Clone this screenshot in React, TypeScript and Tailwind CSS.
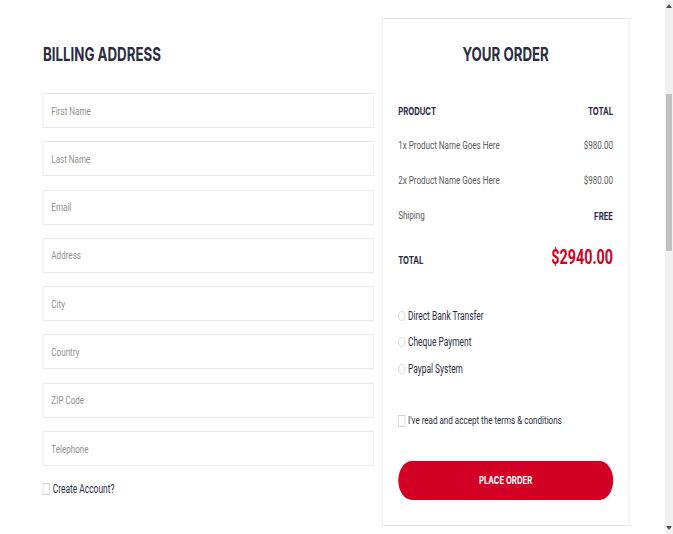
import React from "react";

const fields = ["First Name", "Last Name", "Email", "Address", "City", "Country", "ZIP Code", "Telephone"];

export default function App() {
  return (
    <div className="relative w-[673px] h-[534px] overflow-hidden bg-white">
      <div className="w-[962px] h-[534px] origin-top-left [transform:scaleX(0.7)] font-[Roboto,sans-serif]">
        <div className="h-[534px] flex gap-[11.4px] pl-[61.4px]">
          {/* Billing */}
          <div className="w-[473px] pt-[43px] flex flex-col">
            <h3 className="h-[24px] leading-[24px] text-[19px] font-bold font-[Inter,sans-serif] text-[#2b2d42]">
              BILLING ADDRESS
            </h3>
            <div className="mt-[26px] flex flex-col gap-[13.3px]">
              {fields.map((f) => (
                <input
                  key={f}
                  placeholder={f}
                  className="h-[35px] w-full border border-[#e4e7ed] bg-white px-[11px] text-[11.5px] text-[#333] placeholder:text-[#8f8f8f] outline-none font-[Roboto,sans-serif]"
                />
              ))}
            </div>
            <div className="mt-[15px] h-[16px] flex items-center gap-[4px]">
              <span className="w-[10px] h-[12px] border border-[#d0d0d0] bg-white" />
              <span className="text-[12px] text-[#2b2d42]">Create Account?</span>
            </div>
          </div>

          {/* Order */}
          <div className="w-[353px] mt-[18px] h-[508px] border border-[#e4e7ed] px-[22px] pt-[24px] flex flex-col">
            <h3 className="h-[24px] leading-[24px] text-center text-[19px] font-bold font-[Inter,sans-serif] text-[#2b2d42]">
              YOUR ORDER
            </h3>
            <div className="mt-[26.5px] flex flex-col">
              <div className="h-[35px] flex items-center justify-between text-[11px] font-bold font-[Inter,sans-serif] text-[#2b2d42]">
                <span>PRODUCT</span>
                <span>TOTAL</span>
              </div>
              <div className="h-[35px] flex items-center justify-between text-[11.5px] text-[#5a5a5a]">
                <span>1x Product Name Goes Here</span>
                <span>$980.00</span>
              </div>
              <div className="h-[35px] flex items-center justify-between text-[11.5px] text-[#5a5a5a]">
                <span>2x Product Name Goes Here</span>
                <span>$980.00</span>
              </div>
              <div className="h-[35px] flex items-center justify-between text-[11.5px] text-[#5a5a5a]">
                <span>Shiping</span>
                <span className="text-[11px] font-bold font-[Inter,sans-serif] text-[#2b2d42]">FREE</span>
              </div>
              <div className="mt-[11px] h-[24px] flex items-baseline justify-between">
                <span className="text-[11px] font-bold font-[Inter,sans-serif] text-[#2b2d42]">TOTAL</span>
                <span className="text-[20.5px] leading-[24px] font-bold font-[Roboto,sans-serif] text-[#d10024]">
                  $2940.00
                </span>
              </div>
            </div>

            <div className="mt-[34px] flex flex-col">
              {["Direct Bank Transfer", "Cheque Payment", "Paypal System"].map((p) => (
                <div key={p} className="h-[26.5px] flex items-center gap-[4px]">
                  <span className="w-[10px] h-[10px] rounded-full border border-[#d5d5d5] bg-white" />
                  <span className="text-[12px] text-[#2b2d42]">{p}</span>
                </div>
              ))}
            </div>

            <div className="mt-[25.5px] h-[26.5px] flex items-center gap-[4px]">
              <span className="w-[10px] h-[12px] border border-[#d0d0d0] bg-white" />
              <span className="text-[11.5px] text-[#2b2d42]">I've read and accept the terms &amp; conditions</span>
            </div>

            <button className="mt-[26.75px] h-[39px] w-full rounded-full bg-[#d10024] text-white text-[11px] font-bold font-[Inter,sans-serif]">
              PLACE ORDER
            </button>
          </div>
        </div>
      </div>

      {/* scrollbar */}
      <div className="absolute right-0 top-0 w-[8px] h-[534px] bg-[#f1f1f1]">
        <svg className="absolute left-[1px] top-[4px]" width="6" height="4" viewBox="0 0 6 4">
          <path d="M3 0 L6 4 L0 4 Z" fill="#505050" />
        </svg>
        <div className="absolute left-[1px] top-[94px] w-[6px] h-[157px] bg-[#c1c1c1]" />
        <svg className="absolute left-[1px] bottom-[4px]" width="6" height="4" viewBox="0 0 6 4">
          <path d="M0 0 L6 0 L3 4 Z" fill="#505050" />
        </svg>
      </div>
    </div>
  );
}
